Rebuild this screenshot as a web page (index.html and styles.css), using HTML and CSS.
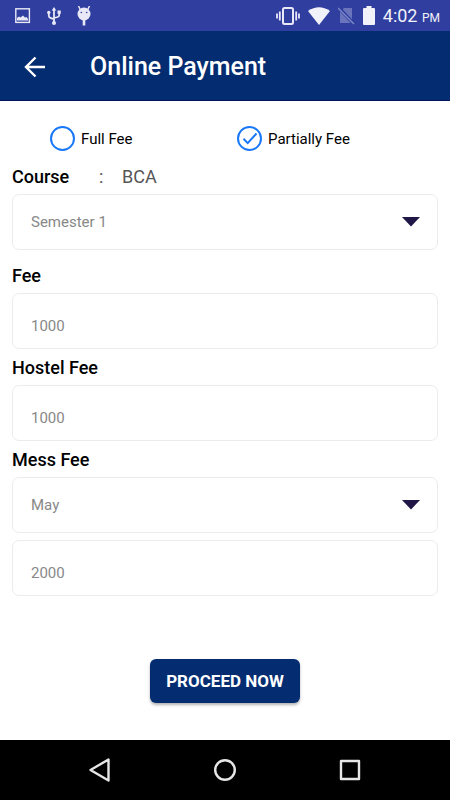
FILE: index.html
```html
<!DOCTYPE html>
<html lang="en">
<head>
    <meta charset="UTF-8">
    <meta name="viewport" content="width=device-width, initial-scale=1.0">
    <title>Online Payment</title>
    <link rel="stylesheet" href="styles.css">
</head>
<body>
    <!-- Status bar -->
    <div class="status-bar">
        <div class="status-left">
            <svg width="16" height="16" viewBox="0 0 16 16">
                <rect x="0.8" y="0.8" width="13.6" height="13.6" fill="none" stroke="#e8e8f6" stroke-width="1.4"/>
                <path d="M2 12.500V10l2-1.500 1.500 1L8 7.500l2 2 1.500-.5L13 11v1.500z" fill="#e8e8f6"/>
            </svg>
            <svg width="14" height="18" viewBox="0 0 14 18">
                <path d="M7 2v13M1.800 6.500v2.300q0 1.500 1.500 2L7 12.200M12.200 6v2q0 1.500-1.500 2L7 11" fill="none" stroke="#e8e8f6" stroke-width="1.8"/>
                <path d="M7 0l2.300 3.500H4.700z" fill="#e8e8f6"/>
                <circle cx="1.800" cy="5.500" r="1.700" fill="#e8e8f6"/>
                <circle cx="7" cy="16" r="2" fill="#e8e8f6"/>
                <rect x="10.500" y="3.500" width="3.300" height="3.300" fill="#e8e8f6"/>
            </svg>
            <svg width="14" height="20" viewBox="0 0 14 20">
                <path d="M1.500 0l2 4M12.500 0l-2 4" stroke="#e8e8f6" stroke-width="1.500"/>
                <circle cx="7" cy="8" r="6.500" fill="#e8e8f6"/>
                <rect x="5.700" y="14" width="2.600" height="5.500" fill="#e8e8f6"/>
                <circle cx="4.300" cy="6.500" r="0.800" fill="#303f9f"/>
                <circle cx="9.700" cy="6.500" r="0.800" fill="#303f9f"/>
            </svg>
        </div>
        <div class="status-right">
            <svg width="24" height="18" viewBox="0 0 24 18">
                <path d="M1 6.500v5M3.800 4.500v9M20.200 4.500v9M23 6.500v5" stroke="#e8e8f6" stroke-width="1.8"/>
                <rect x="7" y="1" width="10" height="16" rx="1.500" fill="none" stroke="#e8e8f6" stroke-width="2"/>
            </svg>
            <svg width="22" height="18" viewBox="0 0 22 18">
                <path d="M11 18L0 4Q11-3.500 22 4z" fill="#f1f1fa"/>
            </svg>
            <svg width="17" height="18" viewBox="0 0 17 18">
                <path d="M6 1h8v15H2V5z" fill="#6a74bd"/>
                <path d="M0 0l16 17" stroke="#303f9f" stroke-width="3.500"/>
                <path d="M0 1l16 16" stroke="#7f88c8" stroke-width="1.300"/>
            </svg>
            <svg width="12" height="19" viewBox="0 0 12 19">
                <path d="M3.500 0h5v2H11q1 0 1 1v15q0 1-1 1H1q-1 0-1-1V3q0-1 1-1h2.500z" fill="#f1f1fa"/>
            </svg>
            <span class="clock">4:02 <small>PM</small></span>
        </div>
    </div>

    <header class="app-bar">
        <a href="#" class="back" aria-label="Back">
            <svg width="22" height="22" viewBox="0 0 22 22">
                <path d="M11.500 1.500L2 11l9.500 9.500M2 11h19" fill="none" stroke="#fff" stroke-width="2.400"/>
            </svg>
        </a>
        <h1>Online Payment</h1>
    </header>

    <form class="payment-form">
        <div class="radio-group">
            <label class="radio">
                <span class="radio-mark">
                    <input type="radio" name="feeType" value="full">
                    <svg viewBox="0 0 25 25"><path d="M6.500 12.800l4.200 4.300 8.800-9.600"/></svg>
                </span>
                Full Fee
            </label>
            <label class="radio">
                <span class="radio-mark">
                    <input type="radio" name="feeType" value="partial" checked>
                    <svg viewBox="0 0 25 25"><path d="M6.500 12.800l4.200 4.300 8.800-9.600"/></svg>
                </span>
                Partially Fee
            </label>
        </div>

        <div class="form-group">
            <div class="course-row">
                <label for="semester">Course</label>
                <span>:</span>
                <span>BCA</span>
            </div>
            <div class="select-box">
                <select id="semester" name="semester">
                    <option>Semester 1</option>
                </select>
                <svg width="18" height="10" viewBox="0 0 18 10"><path d="M0 0h18L9 9.500z"/></svg>
            </div>
        </div>

        <div class="form-group fee-group">
            <label for="fee">Fee</label>
            <input type="text" id="fee" name="fee" value="1000">
        </div>

        <div class="form-group">
            <label for="hostelFee">Hostel Fee</label>
            <input type="text" id="hostelFee" name="hostelFee" value="1000">
        </div>

        <div class="form-group">
            <label for="messMonth">Mess Fee</label>
            <div class="select-box">
                <select id="messMonth" name="messMonth">
                    <option>May</option>
                </select>
                <svg width="18" height="10" viewBox="0 0 18 10"><path d="M0 0h18L9 9.500z"/></svg>
            </div>
        </div>

        <div class="form-group">
            <input type="text" name="messFee" value="2000" aria-label="Mess Fee amount">
        </div>

        <button type="button" class="proceed">PROCEED NOW</button>
    </form>

    <!-- Navigation bar -->
    <nav class="nav-bar">
        <button type="button" aria-label="Back">
            <svg width="24" height="24" viewBox="0 0 24 24"><path d="M20.500 1.500v21L2.500 12z"/></svg>
        </button>
        <button type="button" aria-label="Home">
            <svg width="24" height="24" viewBox="0 0 24 24"><circle cx="12" cy="12" r="9.800"/></svg>
        </button>
        <button type="button" aria-label="Recent apps">
            <svg width="24" height="24" viewBox="0 0 24 24"><rect x="3" y="3" width="18" height="18"/></svg>
        </button>
    </nav>
</body>
</html>
```

FILE: styles.css
```css
* {
    box-sizing: border-box;
}

body {
    font-family: Roboto, Arial, sans-serif;
    margin: 0;
    min-height: 100vh;
    display: flex;
    flex-direction: column;
    background-color: #ffffff;
    color: #000;
}

svg {
    display: block;
}

.status-bar {
    display: flex;
    justify-content: space-between;
    align-items: center;
    height: 31px;
    padding: 0 10px 0 15px;
    background-color: #303f9f;
}

.status-left {
    display: flex;
    align-items: center;
    gap: 16px;
}

.status-right {
    display: flex;
    align-items: center;
    gap: 8px;
}

.clock {
    color: #f1f1fa;
    font-size: 18px;
    font-weight: 400;
}

.clock small {
    font-size: 12px;
}

.app-bar {
    display: flex;
    align-items: center;
    gap: 44px;
    height: 70px;
    padding: 2px 24px 0;
    background-color: #042c71;
    border-bottom: 1px solid #02145c;
}

.app-bar h1 {
    margin: 0;
    color: #fff;
    font-size: 25px;
    font-weight: 500;
}

.payment-form {
    flex: 1;
    display: flex;
    flex-direction: column;
    gap: 7px;
    padding: 24px 12px;
}

.radio-group {
    display: grid;
    grid-template-columns: 187px 1fr;
    padding: 1px 38px 7px;
}

.radio {
    display: flex;
    align-items: center;
    gap: 6px;
    font-size: 15px;
}

.radio-mark {
    display: grid;
}

.radio-mark input,
.radio-mark svg {
    grid-area: 1 / 1;
    width: 25px;
    height: 25px;
    margin: 0;
}

.radio-mark input {
    appearance: none;
    border: 2px solid #1878f8;
    border-radius: 50%;
}

.radio-mark svg {
    visibility: hidden;
    pointer-events: none;
    fill: none;
    stroke: #1878f8;
    stroke-width: 2;
}

.radio-mark input:checked + svg {
    visibility: visible;
}

.form-group {
    display: flex;
    flex-direction: column;
    gap: 5px;
}

.form-group label {
    font-size: 18px;
    font-weight: 500;
    line-height: 24px;
}

.fee-group {
    margin-top: 7px;
}

.course-row {
    display: grid;
    grid-template-columns: 87px 23px 1fr;
    color: #555;
    font-size: 18px;
    line-height: 24px;
}

.course-row label {
    color: #000;
}

.form-group input,
.form-group select {
    width: 100%;
    height: 56px;
    padding: 0 18px;
    border: 1px solid #ececec;
    border-radius: 7px;
    background-color: #fff;
    color: #888;
    font-family: inherit;
    font-size: 15px;
    appearance: none;
}

.form-group input {
    padding-top: 10px;
}

.select-box {
    display: grid;
    align-items: center;
}

.select-box select,
.select-box svg {
    grid-area: 1 / 1;
}

.select-box svg {
    justify-self: end;
    margin-right: 18px;
    fill: #211747;
    pointer-events: none;
}

.proceed {
    align-self: center;
    width: 150px;
    height: 44px;
    margin-top: 56px;
    padding: 0;
    border: none;
    border-radius: 6px;
    background-color: #042c71;
    box-shadow: 0 2px 3px rgba(0, 0, 0, 0.3);
    color: #fff;
    font-family: inherit;
    font-size: 17px;
    font-weight: 700;
}

.nav-bar {
    display: flex;
    justify-content: center;
    align-items: center;
    gap: 101px;
    height: 60px;
    background-color: #000;
}

.nav-bar button {
    padding: 0;
    border: none;
    background: none;
}

.nav-bar svg {
    fill: none;
    stroke: #e6e6e6;
    stroke-width: 2.4;
    stroke-linejoin: round;
}
```
